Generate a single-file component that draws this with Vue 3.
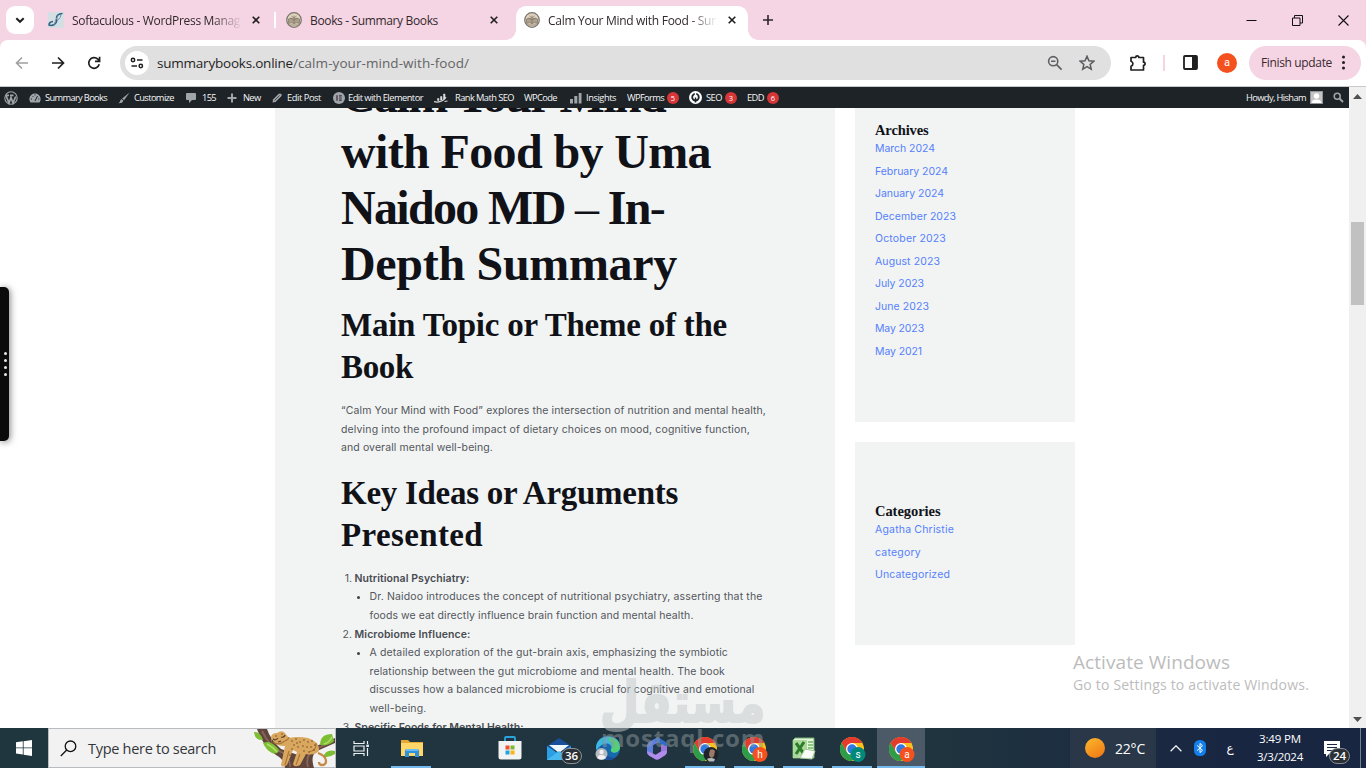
<template>
  <div class="screen">
    <!-- tab strip -->
    <div class="tabs">
      <button class="tab-search">
        <svg width="12" height="12" viewBox="0 0 12 12"><path d="M2.3 4.2 6 7.8l3.7-3.6" fill="none" stroke="#1f1f1f" stroke-width="2" /></svg>
      </button>
      <div v-for="tab in tabs" :key="tab.id" class="tab" :class="[tab.id, { active: tab.active }]">
        <svg v-if="tab.id === 'soft'" class="fav" viewBox="0 0 16 16">
          <rect width="16" height="16" fill="#d5dfe3" />
          <path d="M14.500 1.500Q8 2 8.500 6.500q1 3.500-2 6-3 1.500-5.500.5 0-3 4-3.500" fill="none" stroke="#2f6285" stroke-width="1.500" />
          <path d="M10.500 3Q7 8 6 13M13 2q0 4-3.500 6.500" fill="none" stroke="#6f96ac" />
        </svg>
        <svg v-else class="fav" viewBox="0 0 16 16">
          <circle cx="8" cy="8" r="7.300" fill="#e0d4bd" stroke="#77736e" stroke-width="1.200" />
          <path d="M2.500 11.500q3-1.500 5.500 0 2.500-1.500 5.500 0V7Q10.500 5.500 8 7.200 5.500 5.500 2.500 7z" fill="#ab9f8a" stroke="#7d7468" stroke-width=".7" />
          <path d="M8 12V3.500M4.500 6 8 8l3.500-2M5.500 4 8 6l2.500-2M3 13h10" fill="none" stroke="#857a6d" stroke-width=".8" />
        </svg>
        <div class="tab-title" :class="{ fade: tab.fade }"><span v-fit="tab.w">{{ tab.title }}</span></div>
        <svg class="tab-close" viewBox="0 0 8 8"><path d="m.7.7 6.600 6.600m0-6.600L.7 7.300" stroke="#1f1f1f" stroke-width="1.600" /></svg>
      </div>
      <svg class="new-tab" viewBox="0 0 10 10"><path d="M5 0v10M0 5h10" stroke="#2b2529" stroke-width="1.600" /></svg>
      <div class="win">
        <svg viewBox="0 0 11 11"><path d="M.5 5.500h10" stroke="#111" /></svg>
        <svg viewBox="0 0 11 11"><path d="M.5 3h7.500v7.500H.5zM2.500 3V.5h8V8H8" fill="none" stroke="#111" /></svg>
        <svg viewBox="0 0 11 11"><path d="m.5.5 10 10m0-10-10 10" stroke="#111" stroke-width="1.100" /></svg>
      </div>
    </div>

    <!-- toolbar -->
    <div class="toolbar-wrap">
      <div class="toolbar">
        <svg class="nav" viewBox="0 0 14 14"><path d="M13 7H1.500M7 1.500 1.500 7 7 12.500" fill="none" stroke="#a0a0a3" stroke-width="1.600" /></svg>
        <svg class="nav" viewBox="0 0 14 14"><path d="M1 7h11.500M7 1.500 12.500 7 7 12.500" fill="none" stroke="#1f1f1f" stroke-width="1.700" /></svg>
        <svg class="nav" viewBox="0 0 14 14"><path d="M12.200 8.300A5.300 5.300 0 1 1 10.800 3.200L12.600 5M12.600.8V5.300H8" fill="none" stroke="#1f1f1f" stroke-width="1.700" /></svg>
        <div class="omnibox">
          <div class="site-info">
            <svg width="14" height="12" viewBox="0 0 14 12" fill="none" stroke="#1f1f1f" stroke-width="1.500"><circle cx="3" cy="3" r="1.700" /><path d="M7 3h5.500M1.500 9H7" /><circle cx="10.800" cy="9" r="1.700" /></svg>
          </div>
          <span v-fit="136" class="host">summarybooks.online</span><span v-fit="176" class="path">/calm-your-mind-with-food/</span>
          <svg class="zoom" width="16" height="16" viewBox="0 0 16 16" fill="none" stroke="#5f6063" stroke-width="1.600"><circle cx="6.200" cy="6.200" r="4.600" /><path d="m9.600 9.600 5 5M4 6.200h4.400" /></svg>
          <svg class="star" width="16" height="16" viewBox="0 0 16 16"><path d="m8 1.200 1.950 4.500 4.900.450-3.700 3.250 1.100 4.800L8 11.650 3.750 14.200l1.100-4.800-3.700-3.250 4.900-.450z" fill="none" stroke="#5a5b5e" stroke-width="1.500" /></svg>
        </div>
        <svg class="ext" width="18" height="18" viewBox="0 0 18 18"><path d="M2 3.500h4.700a1.600 1.600 0 0 1 3.200 0h4.600v4.700a1.600 1.600 0 0 1 0 3.200V16H2v-3.700a2.600 2.600 0 0 0 0-5z" fill="none" stroke="#1f1f1f" stroke-width="1.700" stroke-linejoin="round" /></svg>
        <i class="sep"></i>
        <svg class="panel" width="15" height="15" viewBox="0 0 15 15"><rect x="1" y="1" width="13" height="13" rx="1" fill="none" stroke="#1f1f1f" stroke-width="1.800" /><path d="M9 1h5v13H9z" fill="#1f1f1f" /></svg>
        <div class="profile">a</div>
        <div class="update"><span v-fit="71">Finish update</span><i></i></div>
      </div>
    </div>

    <div class="viewport">
      <div class="page-col">
        <!-- wordpress admin bar -->
        <div class="adminbar">
          <div v-for="item in adminItems" :key="item.icon + item.label" class="ab-item" :style="{ width: item.slot + 'px' }">
            <div v-if="item.icon" class="ab-icon" :style="{ width: item.iw + 'px' }">
              <svg v-if="item.icon === 'wp'" width="14" height="14" viewBox="0 0 14 14"><circle cx="7" cy="7" r="6.200" fill="none" stroke="#a0a5aa" stroke-width="1.100" /><path d="M2 4.500 5 12l2-5.500L9 12l2.700-6.500M2 4.300h3M6 4.300h3.500" fill="none" stroke="#a0a5aa" stroke-width="1.700" /></svg>
              <svg v-if="item.icon === 'dash'" width="12" height="12" viewBox="0 0 12 12"><path d="M1.500 10.500A5.600 5.600 0 1 1 10.500 10.500z" fill="#a0a5aa" /><path d="m6 9 2.500-5M2 7h1M3.500 4l.8.8M6 2.500v1M9.200 7h1" stroke="#1d2327" /></svg>
              <svg v-if="item.icon === 'brush'" width="12" height="12" viewBox="0 0 12 12" fill="#a0a5aa"><path d="M11.600.5 6 8.300 4.200 6.600z" /><path d="M3.800 7.200 5.300 8.800Q4.500 11.500.4 11.300 2.200 10 2.300 8.500q.5-1.200 1.500-1.300" /></svg>
              <svg v-if="item.icon === 'comment'" width="10" height="12" viewBox="0 0 10 12"><path d="M1 1h8q1 0 1 1v5q0 1-1 1H6l-3 3V8H1Q0 8 0 7V2q0-1 1-1" fill="#a0a5aa" /></svg>
              <svg v-if="item.icon === 'plus'" width="10" height="10" viewBox="0 0 10 10"><path d="M5 .5v9M.5 5h9" stroke="#a0a5aa" stroke-width="2" /></svg>
              <svg v-if="item.icon === 'pen'" width="10" height="10" viewBox="0 0 10 10"><path d="m1 6.500 5.500-5.500Q8 0 9.200 1T9 3.500L3.500 9l-3 .6z" fill="#a0a5aa" /><path d="m2.500 7.500 5-5" stroke="#1d2327" stroke-width=".7" /></svg>
              <svg v-if="item.icon === 'elementor'" width="12" height="12" viewBox="0 0 12 12"><circle cx="6" cy="6" r="6" fill="#a0a5aa" /><path d="M4 3.300v5.400M6 3.800h2.800M6 6h2.800M6 8.200h2.800" stroke="#3a2c3d" stroke-width="1.200" /></svg>
              <svg v-if="item.icon === 'rank'" width="14" height="11" viewBox="0 0 14 11"><path d="M3.500 8.500V6.500h1.500v2zM6.500 8V4.500H8V8zM9.500 7V2H11v5z" fill="#dedede" stroke="#dedede" stroke-width=".5" /><path d="M0 9.700c4 .8 9 0 12-4.500M13.500 9l-3 .5" fill="none" stroke="#d8d8d8" stroke-width="1.200" /></svg>
              <svg v-if="item.icon === 'bars'" width="12" height="12" viewBox="0 0 12 12" fill="#a0a5aa"><path d="M0 7h3v4.500H0zM4.300 4h3v7.500h-3zM8.700 1h2.800v10.500H8.700z" /></svg>
              <svg v-if="item.icon === 'aio'" width="13" height="13" viewBox="0 0 13 13"><circle cx="6.500" cy="6.500" r="6.500" fill="#fff" /><circle cx="6.500" cy="6.200" r="3.300" fill="none" stroke="#1d2327" stroke-width="1.800" /><path d="M6.500 6.500v5" fill="none" stroke="#1d2327" stroke-width="1.500" /><path d="M6.500 1.500v3" stroke="#fff" stroke-width="1.500" /></svg>
            </div>
            <span v-if="item.label" v-fit="item.w">{{ item.label }}</span>
            <b v-if="item.badge" class="ab-badge">{{ item.badge }}</b>
          </div>
          <div class="howdy">
            <span v-fit="60">Howdy, Hisham</span>
            <svg class="ab-avatar" width="13" height="13" viewBox="0 0 13 13"><rect width="13" height="13" fill="#c4c4c4" /><circle cx="6.500" cy="5" r="2.700" fill="#fff" /><path d="M1.500 12.500q0-4 5-4t5 4z" fill="#fff" /><rect x=".5" y=".5" width="12" height="12" fill="none" stroke="#90959a" /></svg>
            <svg width="11" height="11" viewBox="0 0 11 11"><circle cx="4.200" cy="4.200" r="3" fill="none" stroke="#a0a5aa" stroke-width="1.500" /><path d="m6.500 6.500 3.500 3.500" stroke="#a0a5aa" stroke-width="2" /></svg>
          </div>
        </div>

        <div class="page">
          <article>
            <h1>
              <span v-fit="324">Calm Your Mind</span>
              <span v-fit="370">with Food by Uma</span>
              <span v-fit="323">Naidoo MD <i>–</i> In<i>-</i></span>
              <span v-fit="336">Depth Summary</span>
            </h1>
            <h2><span v-fit="386">Main Topic or Theme of the</span><span v-fit="72">Book</span></h2>
            <p><span v-for="l in intro" :key="l.t" v-fit="l.w">{{ l.t }}</span></p>
            <h2><span v-fit="337">Key Ideas or Arguments</span><span v-fit="142">Presented</span></h2>
            <ol>
              <li v-for="(idea, i) in ideas" :key="idea.t">
                <div class="idea"><i>{{ i + 1 }}.</i><strong v-fit="idea.w">{{ idea.t }}</strong></div>
                <ul v-if="idea.lines.length">
                  <li><span v-for="l in idea.lines" :key="l.t" v-fit="l.w">{{ l.t }}</span></li>
                </ul>
              </li>
            </ol>
          </article>
          <aside>
            <section class="archives">
              <h3><span v-fit="53.5">Archives</span></h3>
              <a v-for="l in archives" :key="l.t"><span v-fit="l.w">{{ l.t }}</span></a>
            </section>
            <section class="categories">
              <h3><span v-fit="65.5">Categories</span></h3>
              <a v-for="l in categories" :key="l.t"><span v-fit="l.w">{{ l.t }}</span></a>
            </section>
          </aside>
        </div>
      </div>
      <div class="scrollbar">
        <svg width="9" height="5" viewBox="0 0 9 5"><path d="M0 5 4.500 0 9 5z" fill="#505050" /></svg>
        <div class="thumb"></div>
        <svg width="9" height="5" viewBox="0 0 9 5"><path d="m0 0 4.500 5L9 0z" fill="#505050" /></svg>
      </div>
    </div>

    <!-- taskbar -->
    <div class="taskbar">
      <div class="start">
        <svg width="16" height="16" viewBox="0 0 16 16" fill="#fff"><path d="M0 2.300 6.800 1.300v6.200H0zM7.600 1.200 16 0v7.500H7.600zM0 8.300h6.800v6.200L0 13.600zM7.600 8.300H16V16l-8.400-1.300z" /></svg>
      </div>
      <div class="search">
        <svg width="17" height="17" viewBox="0 0 17 17" fill="none" stroke="#111" stroke-width="1.300"><circle cx="10.500" cy="6.300" r="5.300" /><path d="M6.700 10 .8 16" /></svg>
        <span v-fit="128">Type here to search</span>
        <svg class="leopard" width="81" height="39" viewBox="0 0 81 39">
          <path d="M3 0q6 18 19 26 8 4 9 13h29q-4-13 3-17l18-8V9L60 18l-16 8-17-6Q16 10 13 0z" fill="#60453d" />
          <path d="M8 2q8 17 21 22 7 4 7 14M79 12 60 21q-9 5-6 17" fill="none" stroke="#896458" stroke-width="1.800" />
          <path d="M0 3q6-1 9 8-8 1-9-8M9 14q8-4 16 7-1 5-7 3-6-3-9-10M66 16q0-11 12-11l2 7q-4 5-14 4M69 28q3-8 12-6v3q-6 4-12 3" fill="#7dbe35" />
          <path d="M13 15q6 3 10 8M70 15q5-1 8-7" stroke="#b3e064" stroke-width="1.500" fill="none" />
          <path d="M18 14 17 9q0-5 6-5 4-3 7-1l5 6q9-2 19 0 12 4 11 13-5 5-13 3l-6 11q-6 3-7-1l4-12-4-2-6 15q-5 3-6 0l4-19q-8 1-13-7" fill="#d9a75e" />
          <path d="M19 13q5 4 12-1 4-2 4-4M35 22l-4 14M46 25l-4 11M62 14q1 7-7 9" stroke="#ac7638" fill="none" stroke-width="1.200" />
          <path d="M19 10q3 2 5-1M27 8q3 1 4-2M24 13l3-1" stroke="#58402b" fill="none" stroke-width="1.200" />
          <g fill="#795027"><circle v-for="(s, i) in spots" :key="i" :cx="s[0]" :cy="s[1]" r=".8" /></g>
          <path d="M64 24q8 3 8 8 0 4-4 4-3 0-3-3" fill="none" stroke="#c58b46" stroke-width="2.300" />
        </svg>
      </div>
      <div class="apps">
        <div v-for="app in apps" :key="app.id" class="app" :class="{ open: app.open, focus: app.focus }">
          <svg v-if="app.id === 'view'" class="view" width="17" height="17" viewBox="0 0 17 17" fill="none" stroke="#eef1f2" stroke-width="1.200"><path d="M1 1v2.500h10V1M1 16v-2.500h10V16M1 6h10v5H1zM14.500 1v3M14.500 8v8" /><path d="M13.300 5.800h2.600" stroke-width="2.400" /></svg>
          <svg v-if="app.id === 'files'" width="22" height="19" viewBox="0 0 22 19"><path d="M0 1h7l2 2h13v14H0z" fill="#e7a935" /><path d="M0 4h22v13H0z" fill="#ffd768" /><path d="M4 18v-6q0-2 2-2h10q2 0 2 2v6h-4v-4H8v4z" fill="#3092df" /><path d="M5 10h12v2H5z" fill="#68bdf2" /></svg>
          <svg v-if="app.id === 'store'" width="24" height="24" viewBox="0 0 24 24"><path d="M7 6V2q0-1 1-1h8q1 0 1 1v4" fill="none" stroke="#2ba4dc" stroke-width="1.800" /><path d="M.5 5h23v16q0 2.500-2.500 2.500H3Q.5 23.500.5 21z" fill="#f2f4f4" /><path d="M7.500 9.500h4v4h-4z" fill="#ef5032" /><path d="M12.500 9.500h4v4h-4z" fill="#7db82e" /><path d="M7.500 14.500h4v4h-4z" fill="#20a4e8" /><path d="M12.500 14.500h4v4h-4z" fill="#fab514" /></svg>
          <svg v-if="app.id === 'mail'" class="mail" width="36" height="28" viewBox="0 0 36 28"><path d="m0 9 12-8 12 8v4H0z" fill="#174f98" /><path d="M0 9v14h24V9l-12 8z" fill="#2a9fe5" /><path d="M2 8h20l-10 8z" fill="#edf7fc" /><path d="m0 23 12-9 12 9z" fill="#48b9ee" /><rect x="14.500" y="11.500" width="20" height="15" rx="7.500" fill="#2b3036" stroke="#8b9095" /><text x="24.500" y="23.200">36</text></svg>
          <svg v-if="app.id === 'edge'" width="25" height="25" viewBox="0 0 25 25"><circle cx="13" cy="12" r="12" fill="#1769ae" /><path d="M1 12C1-3 25-3 25 11c0 7-10 7-9 3 3-4-4-9-9-5-4 2-6 7-6 3" fill="#3cb7df" /><path d="M14 1q11 2 11 11-2 6-8 4-2-1-1-3 4-5-2-8z" fill="#53cf77" /><path d="M8 13q0 8 12 9-7 5-14-1-4-6 1-12z" fill="#1d4e9a" /><circle cx="6.500" cy="18" r="6" fill="#b5bbc0" /><circle cx="6.500" cy="16" r="2.200" fill="#f2f2f2" /><path d="M2.500 22q0-3 4-3t4 3q-4 3-8 0" fill="#f2f2f2" /></svg>
          <svg v-if="app.id === 'm365'" width="22" height="23" viewBox="0 0 22 23"><path d="M12 0 3 5Q1 6.500 1 9v6q0 2.500 2 3.500l4 1.500V8.500l8-5z" fill="#5f7fe0" /><path d="m12 0 7 4.500q2 1.200 2 4V14l-6-3V7L9 4z" fill="#2f6bcb" /><path d="M21 9v5.500q0 2.500-2 3.700L13 22q-2 1-4 0l-6-3.500q4 1 6-.5l6-3.500V8z" fill="#9d75da" /><path d="m1 14 6 2.500 3 1.500 5-3.500 6-1q0 3-2 4.700L13 22q-2 1-4 0l-6-3.500Q1 17 1 14" fill="#b08cea" /><path d="m11 6.500 4 2.300v5L11 16l-4-2.200v-5z" fill="#22374a" /></svg>
          <svg v-if="app.id === 'excel'" width="24" height="23" viewBox="0 0 24 23"><path d="M3 1h19v20H1V3z" fill="#e4f4df" stroke="#71ad67" /><path d="M1 3h14v15l-14 3z" fill="#a9d99a" /><path d="m4 6 8 11M12 5 4 17" stroke="#2c7c2b" stroke-width="3" /><path d="M16 5h5M16 8h5M16 11h5" stroke="#70b960" stroke-width="1.500" /><path d="m13 12 10 2-3 8-12-1z" fill="#f9fdf7" stroke="#9fc696" /></svg>
          <svg v-if="app.chrome" class="chrome" width="27" height="26" viewBox="0 0 27 26">
            <circle cx="12" cy="12" r="12" fill="#fbc11a" />
            <path d="M1.600 6A12 12 0 0 1 22.400 6H12L6.800 15z" fill="#e33b2e" />
            <path d="M1.600 6A12 12 0 0 0 12 24l5.200-9H6.800z" fill="#2d9d49" />
            <circle cx="12" cy="12" r="6" fill="#fff" /><circle cx="12" cy="12" r="4.700" fill="#3079e4" />
            <circle cx="18" cy="17.500" r="7.500" :fill="app.color" />
            <path v-if="!app.letter" d="M17 13q3-2 5 1l-1 5-2 2q-3-1-3-4z" fill="#997967" />
            <path v-if="!app.letter" d="M14 22q3-2 8 0l-1 2.500h-5z" fill="#b5babd" />
            <text v-else x="18" y="21.300">{{ app.letter }}</text>
          </svg>
        </div>
      </div>
      <div class="weather"><i></i><span v-fit="30">22°C</span></div>
      <div class="tray">
        <svg width="12" height="7" viewBox="0 0 12 7"><path d="m.6 6.200 5.400-5.400 5.400 5.400" fill="none" stroke="#f0f2f5" stroke-width="1.300" /></svg>
        <svg class="bt" width="12" height="16" viewBox="0 0 12 16"><rect width="12" height="16" rx="5.500" fill="#1380ee" /><path d="m3 5.300 5.500 5-2.500 2.300V3.400l2.500 2.300-5.500 5" fill="none" stroke="#fff" /></svg>
        <span class="lang">ع</span>
        <div class="clock"><span v-fit="42">3:49 PM</span><span v-fit="46">3/3/2024</span></div>
        <svg class="notif" width="27" height="26" viewBox="0 0 27 26"><path d="M0 2h16v13H5l-3 3v-3H0z" fill="#fff" /><path d="M3 5.500h10M3 8.500h10M3 11.500h6" stroke="#1a2740" /><rect x="5.500" y="9.500" width="20" height="15" rx="7.500" fill="#2b3036" stroke="#858b92" /><text x="15.500" y="21.200">24</text></svg>
        <i class="peek"></i>
      </div>
    </div>

    <!-- things floating over the desktop -->
    <div class="handle"><i v-for="n in 4" :key="n"></i></div>
    <div class="activate">
      <div class="big"><span v-fit="157">Activate Windows</span></div>
      <div class="small"><span v-fit="236">Go to Settings to activate Windows.</span></div>
    </div>
    <div class="mark-ar" lang="ar">مستقل</div>
    <div class="mark-en"><span v-fit="164">mostaql.com</span></div>
  </div>
</template>

<script setup>
// tracks a line of text out to a given width
const vFit = {
  mounted(el, { value }) {
    const extra = value - el.getBoundingClientRect().width
    el.style.letterSpacing = extra / el.textContent.length + 'px'
  }
}

const tabs = [
  { id: 'soft', title: 'Softaculous - WordPress Manag', w: 168, fade: true },
  { id: 'books', title: 'Books - Summary Books', w: 128 },
  { id: 'calm', title: 'Calm Your Mind with Food - Sum', w: 174, fade: true, active: true }
]

const adminItems = [
  { icon: 'wp', iw: 14, label: '', slot: 25 },
  { icon: 'dash', iw: 16, label: 'Summary Books', w: 62, slot: 89 },
  { icon: 'brush', iw: 16, label: 'Customize', w: 40, slot: 68 },
  { icon: 'comment', iw: 16, label: '155', w: 14, slot: 41 },
  { icon: 'plus', iw: 16, label: 'New', w: 17.5, slot: 45 },
  { icon: 'pen', iw: 15, label: 'Edit Post', w: 34, slot: 61 },
  { icon: 'elementor', iw: 15, label: 'Edit with Elementor', w: 75, slot: 101 },
  { icon: 'rank', iw: 21, label: 'Rank Math SEO', w: 59, slot: 90 },
  { icon: '', label: 'WPCode', w: 33, slot: 46 },
  { icon: 'bars', iw: 16, label: 'Insights', w: 30, slot: 57 },
  { icon: '', label: 'WPForms', w: 37, slot: 62, badge: 5 },
  { icon: 'aio', iw: 17, label: 'SEO', w: 16, slot: 58, badge: 3 },
  { icon: '', label: 'EDD', w: 17, slot: 40, badge: 6 }
]

const intro = [
  { t: '“Calm Your Mind with Food” explores the intersection of nutrition and mental health,', w: 425 },
  { t: 'delving into the profound impact of dietary choices on mood, cognitive function,', w: 409 },
  { t: 'and overall mental well-being.', w: 152 }
]

const ideas = [
  {
    t: 'Nutritional Psychiatry:', w: 115,
    lines: [
      { t: 'Dr. Naidoo introduces the concept of nutritional psychiatry, asserting that the', w: 393 },
      { t: 'foods we eat directly influence brain function and mental health.', w: 324 }
    ]
  },
  {
    t: 'Microbiome Influence:', w: 116,
    lines: [
      { t: 'A detailed exploration of the gut-brain axis, emphasizing the symbiotic', w: 358.5 },
      { t: 'relationship between the gut microbiome and mental health. The book', w: 355.5 },
      { t: 'discusses how a balanced microbiome is crucial for cognitive and emotional', w: 385 },
      { t: 'well-being.', w: 57 }
    ]
  },
  { t: 'Specific Foods for Mental Health:', w: 169, lines: [] }
]

const archives = [
  { t: 'March 2024', w: 60 },
  { t: 'February 2024', w: 73 },
  { t: 'January 2024', w: 69 },
  { t: 'December 2023', w: 81 },
  { t: 'October 2023', w: 71 },
  { t: 'August 2023', w: 65 },
  { t: 'July 2023', w: 49 },
  { t: 'June 2023', w: 54 },
  { t: 'May 2023', w: 49 },
  { t: 'May 2021', w: 47 }
]

const categories = [
  { t: 'Agatha Christie', w: 79 },
  { t: 'category', w: 46 },
  { t: 'Uncategorized', w: 75 }
]

const apps = [
  { id: 'view' },
  { id: 'files', open: true },
  { id: 'none' },
  { id: 'store' },
  { id: 'mail' },
  { id: 'edge' },
  { id: 'm365' },
  { id: 'c1', chrome: true, color: '#20242a', open: true },
  { id: 'c2', chrome: true, color: '#f4511e', letter: 'h', open: true },
  { id: 'excel', open: true },
  { id: 'c3', chrome: true, color: '#00897b', letter: 's', open: true },
  { id: 'c4', chrome: true, color: '#f4511e', letter: 'a', open: true, focus: true }
]

const spots = [[38, 12], [42, 10], [46, 13], [50, 11], [54, 13], [58, 12], [61, 16], [40, 16], [44, 18], [49, 17], [53, 18], [57, 18], [60, 21], [55, 23], [50, 22], [38, 20], [36, 26], [43, 14], [28, 5], [22, 7]]
</script>

<style>
body {
  overflow: hidden;
}
</style>

<style scoped>
* {
  box-sizing: border-box;
}

.screen {
  position: relative;
  width: 1366px;
  height: 768px;
  overflow: hidden;
  display: flex;
  flex-direction: column;
  background: #fff;
  font-family: "Open Sans", "Noto Sans", sans-serif;
}

svg {
  flex: none;
  display: block;
}

span, strong {
  white-space: pre;
}

/* tabs */
.tabs {
  height: 40px;
  flex: none;
  display: flex;
  background: #f5d5e3;
}

.tab-search {
  width: 28px;
  height: 28px;
  margin: 6px 0 0 6px;
  padding: 0;
  border: 0;
  border-radius: 9px;
  background: #fff;
  display: flex;
  align-items: center;
  justify-content: center;
}

.tab {
  position: relative;
  display: flex;
  align-items: center;
  height: 34px;
  margin-top: 6px;
  padding: 0 12px 6px 8px;
}

.tab.soft {
  width: 238px;
  margin-left: 6px;
}

.tab.books {
  width: 238px;
}

.tab.books::before {
  content: "";
  position: absolute;
  left: -4px;
  top: 6px;
  width: 2px;
  height: 16px;
  background: #fff;
}

.tab.active {
  width: 232px;
  background: #fff;
  border-radius: 10px 10px 0 0;
}

.tab.active::before,
.tab.active::after {
  content: "";
  position: absolute;
  bottom: 0;
  width: 10px;
  height: 10px;
}

.tab.active::before {
  left: -10px;
  background: radial-gradient(circle at 0 0, transparent 9.5px, #fff 10px);
}

.tab.active::after {
  right: -10px;
  background: radial-gradient(circle at 100% 0, transparent 9.5px, #fff 10px);
}

.fav {
  width: 16px;
  height: 16px;
}

.tab-title {
  width: 168px;
  margin-left: 8px;
  overflow: hidden;
  font-size: 12px;
  color: #33282d;
}

.tab-title.fade {
  mask-image: linear-gradient(90deg, #000 140px, transparent 170px);
}

.tab-close {
  width: 8px;
  height: 8px;
  margin-left: auto;
}

.books .tab-close,
.soft .tab-close {
  margin-right: 6px;
}

.new-tab {
  width: 10px;
  height: 10px;
  margin: 15px 0 0 15px;
}

.win {
  display: flex;
  gap: 35px;
  margin: 15px 17px 0 auto;
}

.win svg {
  width: 11px;
  height: 11px;
}

/* toolbar */
.toolbar-wrap {
  height: 47px;
  flex: none;
  background: #f5d5e3;
}

.toolbar {
  height: 47px;
  display: flex;
  align-items: center;
  padding: 0 5px 1px 15px;
  background: #fff;
  border-radius: 8px 8px 0 0;
  border-bottom: 1px solid #c9c9c9;
}

.nav {
  width: 14px;
  height: 14px;
  margin-right: 22px;
}

.nav + .nav + .nav {
  margin-right: 19px;
}

.omnibox {
  width: 991px;
  height: 34px;
  border-radius: 17px;
  background: #e0e0e0;
  display: flex;
  align-items: center;
  padding: 0 16px 0 5px;
  font-size: 13.5px;
}

.site-info {
  width: 24px;
  height: 24px;
  border-radius: 50%;
  background: #fff;
  display: flex;
  align-items: center;
  justify-content: center;
  margin-right: 8px;
}

.host {
  color: #1f1f1f;
}

.path {
  color: #636466;
}

.zoom {
  margin-left: auto;
}

.star {
  margin-left: 16px;
}

.ext {
  margin-left: 18px;
}

.sep {
  width: 2px;
  height: 16px;
  background: #f5d5e3;
  margin-left: 16px;
}

.panel {
  margin-left: 18px;
}

.profile {
  width: 20px;
  height: 20px;
  margin-left: 19px;
  border-radius: 50%;
  background: #f4511e;
  color: #fff;
  font: 11px/19px Roboto, sans-serif;
  text-align: center;
}

.update {
  width: 112px;
  height: 34px;
  margin-left: auto;
  border-radius: 17px;
  padding: 0 16px 0 12px;
  background: #f5d5e3;
  color: #3a2930;
  font-size: 12px;
  display: flex;
  align-items: center;
  justify-content: space-between;
}

.update i {
  width: 3px;
  height: 3px;
  border-radius: 50%;
  background: #1f1f1f;
  box-shadow: 0 -5.5px #1f1f1f, 0 5.5px #1f1f1f;
}

/* viewport */
.viewport {
  height: 641px;
  flex: none;
  display: flex;
}

.page-col {
  width: 1349px;
  height: 641px;
  overflow: hidden;
}

.adminbar {
  position: relative;
  z-index: 1;
  height: 21px;
  display: flex;
  align-items: center;
  padding-left: 4px;
  background: #1d2327;
  color: #f6f6f7;
  font-size: 9.3px;
}

.ab-item,
.howdy {
  display: flex;
  align-items: center;
}

.ab-badge {
  width: 12px;
  height: 12px;
  margin-left: 3px;
  border-radius: 50%;
  background: #d63638;
  color: #fff;
  font: 7.5px/12px "Open Sans", sans-serif;
  text-align: center;
}

.howdy {
  margin-left: auto;
  padding-right: 5px;
}

.ab-avatar {
  margin: 0 10px 0 4px;
}

.page {
  display: flex;
  align-items: flex-start;
  padding-left: 275px;
}

article {
  width: 560px;
  height: 620px;
  padding-left: 66px;
  background: #f2f4f4;
}

h1, h2, h3, p, ol, ul {
  margin: 0;
  padding: 0;
  list-style: none;
}

h1, h2, h3 {
  font-family: "Liberation Serif", serif;
  font-weight: 700;
  color: #101218;
}

h1, h2, p {
  display: flex;
  flex-direction: column;
  align-items: flex-start;
}

h1 {
  margin-top: -40px;
  font-size: 48px;
  line-height: 56px;
}

h1 i {
  font-style: normal;
  font-weight: 400;
}

h2 {
  margin-top: 12px;
  font-size: 33px;
  line-height: 42px;
}

p {
  margin-top: 14px;
}

p + h2 {
  margin-top: 14px;
}

p, ol {
  font-family: Inter, sans-serif;
  font-size: 10.5px;
  line-height: 18.6px;
  color: #53565b;
}

ol {
  margin-top: 14px;
}

.idea {
  display: flex;
}

.idea i {
  width: 13.5px;
  font-style: normal;
  text-align: right;
  padding-right: 2.5px;
}

.idea strong {
  font-weight: 600;
  color: #484b50;
}

ul li {
  position: relative;
  display: flex;
  flex-direction: column;
  align-items: flex-start;
  padding-left: 28.5px;
}

ul li::before {
  content: "";
  position: absolute;
  left: 16px;
  top: 8px;
  width: 3px;
  height: 3px;
  border-radius: 50%;
  background: #3d4045;
}

aside {
  width: 220px;
  margin-left: 20px;
}

section {
  padding-left: 20px;
  background: #f2f4f4;
}

.archives {
  height: 314px;
  padding-top: 14px;
}

.categories {
  height: 203px;
  margin-top: 20px;
  padding-top: 61px;
}

h3 {
  font-size: 14.5px;
  line-height: 17px;
  height: 16px;
}

section a {
  display: block;
  height: 22.5px;
  font: 10.5px/22.5px Inter, sans-serif;
  color: #5580fb;
}

.scrollbar {
  width: 17px;
  background: #f0f0f0;
  display: flex;
  flex-direction: column;
  align-items: center;
  padding: 7px 0 6px;
}

.thumb {
  width: 13px;
  height: 83px;
  margin: 123px 0 auto;
  background: #c1c1c1;
}

/* taskbar */
.taskbar {
  height: 40px;
  flex: none;
  display: flex;
  background: linear-gradient(90deg, #20363f 0, #20343f 68%, #1c2d40 80%, #192642 90%);
  color: #fff;
}

.start {
  width: 48px;
  display: flex;
  align-items: center;
  justify-content: center;
}

.search {
  width: 288px;
  display: flex;
  align-items: center;
  padding-left: 11px;
  background: #f2f2f2;
  border: 1px solid #b9bcbe;
  color: #33373a;
  font-size: 14.5px;
}

.search span {
  margin-left: 11px;
}

.leopard {
  margin-left: auto;
}

.apps {
  display: flex;
  padding-left: 2px;
}

.app {
  position: relative;
  width: 49px;
  display: flex;
  align-items: center;
  justify-content: center;
}

.app.open::after {
  content: "";
  position: absolute;
  left: 4px;
  bottom: 0;
  width: 40px;
  height: 2px;
  background: #76b9ed;
}

.app.focus {
  width: 48px;
  background: #4b5a66;
}

.app.focus::after {
  left: 0;
  width: 48px;
}

.view {
  margin-right: 3px;
}

.mail {
  margin: 5px -12px 0 0;
}

.chrome {
  margin: 3px -2px 0 0;
}

.app text {
  font: 10px Roboto, sans-serif;
  fill: #fff;
  text-anchor: middle;
}

.app .mail text,
.mail text,
.notif text {
  font: 600 11.5px "Open Sans", sans-serif;
  fill: #fff;
  text-anchor: middle;
}

.weather {
  width: 86px;
  margin-left: 145px;
  padding-left: 15px;
  display: flex;
  align-items: center;
  background: #293749;
  font-size: 14px;
}

.weather i {
  width: 20px;
  height: 20px;
  margin-right: 10px;
  border-radius: 50%;
  background: linear-gradient(150deg, #fdb82d, #ee7414);
}

.tray {
  flex: 1;
  display: flex;
  align-items: center;
  padding-left: 14px;
}

.bt {
  margin-left: 12px;
}

.lang {
  width: 10px;
  margin-left: 19px;
  font: 12px "DejaVu Sans", sans-serif;
  text-align: center;
}

.clock {
  width: 50px;
  margin-left: 20px;
  display: flex;
  flex-direction: column;
  align-items: center;
  font-size: 11.5px;
  line-height: 18px;
}

.notif {
  margin: 7px 0 0 19px;
}

.peek {
  width: 1px;
  height: 40px;
  margin-left: 9px;
  background: #77808f;
}

/* overlays */
.handle {
  position: absolute;
  left: 0;
  top: 287px;
  width: 9px;
  height: 154px;
  padding-left: 1px;
  border-radius: 0 5px 5px 0;
  background: #0b0b0b;
  box-shadow: 1px 1px 7px rgba(0, 0, 0, 0.5);
  display: flex;
  flex-direction: column;
  align-items: center;
  justify-content: center;
  gap: 4px;
}

.handle i {
  width: 3px;
  height: 3px;
  border-radius: 50%;
  background: #e8e8e8;
}

.activate {
  position: absolute;
  left: 1073px;
  top: 649px;
  color: #bcbcbc;
}

.big {
  font-size: 19px;
  line-height: 26px;
}

.small {
  font-size: 14px;
  line-height: 20px;
}

.mark-ar,
.mark-en {
  position: absolute;
  white-space: nowrap;
}

.mark-ar {
  left: 600px;
  top: 673px;
  font: 700 52px/60px "DejaVu Sans", sans-serif;
  color: #c6c9c9;
  -webkit-text-stroke: 2px #c6c9c9;
  opacity: 0.5;
  transform: scale(0.87, 1.08);
  transform-origin: 0 50%;
}

.mark-en {
  left: 601px;
  top: 723px;
  font: 700 24px/30px "Open Sans", sans-serif;
  color: rgba(145, 152, 155, 0.5);
}
</style>
